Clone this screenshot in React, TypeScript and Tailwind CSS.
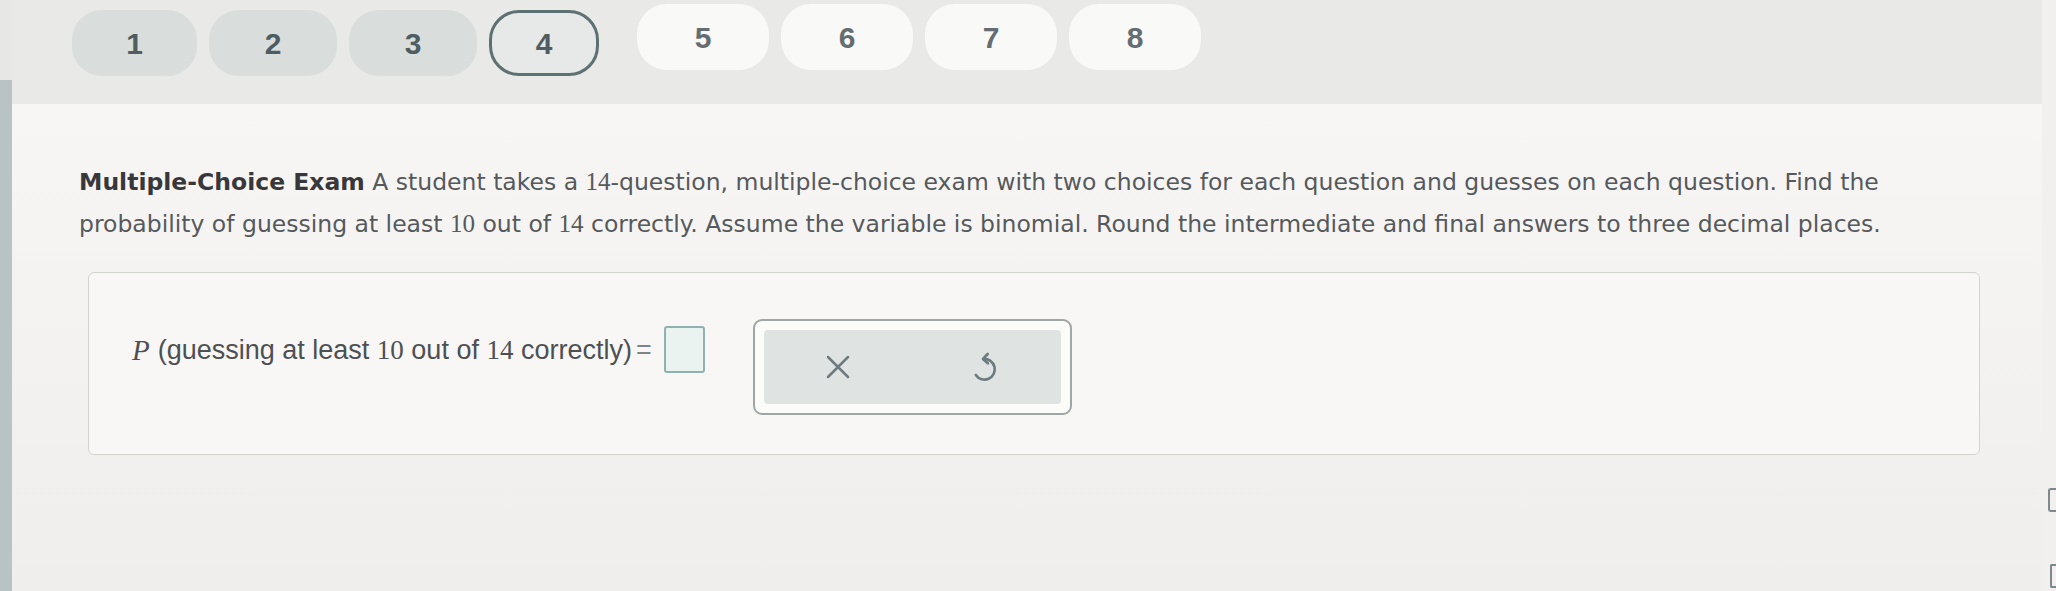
import React from 'react';

const pills = [
  { n: 1, state: 'done', w: 'w-[125px]' },
  { n: 2, state: 'done', w: 'w-[128px]' },
  { n: 3, state: 'done', w: 'w-[128px]' },
  { n: 4, state: 'current', w: 'w-[110px]' },
  { n: 5, state: 'todo', w: 'w-[132px]' },
  { n: 6, state: 'todo', w: 'w-[132px]' },
  { n: 7, state: 'todo', w: 'w-[132px]' },
  { n: 8, state: 'todo', w: 'w-[132px]' },
];

function QuestionPill({ n, state, w }: { n: number; state: string; w: string }) {
  const base = `${w} h-[66px] rounded-[30px] flex items-center justify-center text-[30px] font-bold font-['Liberation_Sans',Arial,sans-serif]`;
  if (state === 'current') {
    return (
      <div className={`${base} mr-[26px] bg-[#e6e9e8] border-[3px] border-[#5d7072] text-[#4f5d62]`}>
        {n}
      </div>
    );
  }
  if (state === 'done') {
    return <div className={`${base} bg-[#d9dddc] text-[#4f5d62]`}>{n}</div>;
  }
  return <div className={`${base} bg-[#f9f9f7] text-[#646d71] -mt-[6px]`}>{n}</div>;
}

function Num({ children, size }: { children: React.ReactNode; size: string }) {
  return <span className={`font-['Liberation_Serif','Times_New_Roman',serif] ${size}`}>{children}</span>;
}

function ClearIcon() {
  return (
    <svg width="40" height="40" viewBox="0 0 24 24" fill="none" stroke="#6d7b80" strokeWidth="1.5" strokeLinecap="round">
      <path d="M6 6l12 12M18 6L6 18" />
    </svg>
  );
}

function UndoIcon() {
  return (
    <svg width="40" height="40" viewBox="0 0 24 24" fill="none" stroke="#6d7b80" strokeWidth="1.6" strokeLinecap="round" strokeLinejoin="round">
      <path d="M10.5 7.2a6.2 6.2 0 1 1-4.6 9.6" />
      <path d="M13 4.2L10.2 7.2l2.9 2.6" />
    </svg>
  );
}

export default function App() {
  return (
    <div className="w-full h-[591px] flex overflow-hidden bg-[#f4f3f1]">
      {/* left window edge */}
      <div className="w-[12px] flex flex-col">
        <div className="h-[80px] bg-[#e7e7e5]" />
        <div className="flex-1 bg-[#b9c3c6]" />
      </div>

      <div className="flex-1 flex flex-col">
        {/* question navigation */}
        <div className="h-[104px] bg-[#e9e9e7] flex items-start gap-[12px] pl-[60px] pt-[10px]">
          {pills.map((p) => (
            <QuestionPill key={p.n} {...p} />
          ))}
        </div>

        <div className="flex-1 bg-linear-to-b from-[#f7f6f4] to-[#efeeec]">
          <p className="pl-[67px] pt-[57px] w-[1925px] text-[23.5px] leading-[42px] text-[#56595b] font-['DejaVu_Sans',Verdana,sans-serif]">
            <span className="font-bold text-[#38383c]">Multiple-Choice Exam</span> A student takes a{' '}
            <Num size="text-[25px]">14</Num>-question, multiple-choice exam with two choices for each question and
            guesses on each question. Find the probability of guessing at least <Num size="text-[25px]">10</Num> out
            of <Num size="text-[25px]">14</Num> correctly. Assume the variable is binomial. Round the intermediate and
            final answers to three decimal places.
          </p>

          {/* answer panel */}
          <div className="ml-[76px] mt-[27px] w-[1892px] h-[183px] border border-[#d3d3d0] rounded-[6px] bg-[#f8f7f5] pl-[43px] pt-[46px] flex items-start">
            <div className="mt-[12px] flex items-center text-[27px] leading-[38px] text-[#4d5053] font-['Liberation_Sans',Arial,sans-serif]">
              <span className="italic font-['Liberation_Serif','Times_New_Roman',serif] text-[29px] mr-[8px]">P</span>
              <span>
                (guessing at least <Num size="text-[27px]">10</Num> out of <Num size="text-[27px]">14</Num> correctly)
              </span>
              <span className="ml-[4px] text-[#7f8487]">=</span>
            </div>
            <div className="ml-[12px] mt-[7px] w-[41px] h-[47px] border-2 border-[#8fb2ae] rounded-[3px] bg-[#ebf3f1]" />

            <div className="ml-[48px] w-[319px] h-[96px] border-2 border-[#9ea6a6] rounded-[9px] bg-[#fbfbfa] p-[9px]">
              <div className="w-full h-full rounded-[4px] bg-[#dfe3e2] flex">
                <div className="flex-1 flex items-center justify-center">
                  <ClearIcon />
                </div>
                <div className="flex-1 flex items-center justify-center">
                  <UndoIcon />
                </div>
              </div>
            </div>
          </div>
        </div>
      </div>

      {/* side toolbar peeking in */}
      <div className="w-[14px] flex flex-col items-end bg-[#f1f0ee]">
        <div className="mt-[488px] w-[8px] h-[24px] border-2 border-r-0 border-[#7f898c] rounded-l-[3px]" />
        <div className="mt-[52px] w-[6px] h-[24px] border-2 border-r-0 border-[#7f898c] rounded-l-[2px]" />
      </div>
    </div>
  );
}
